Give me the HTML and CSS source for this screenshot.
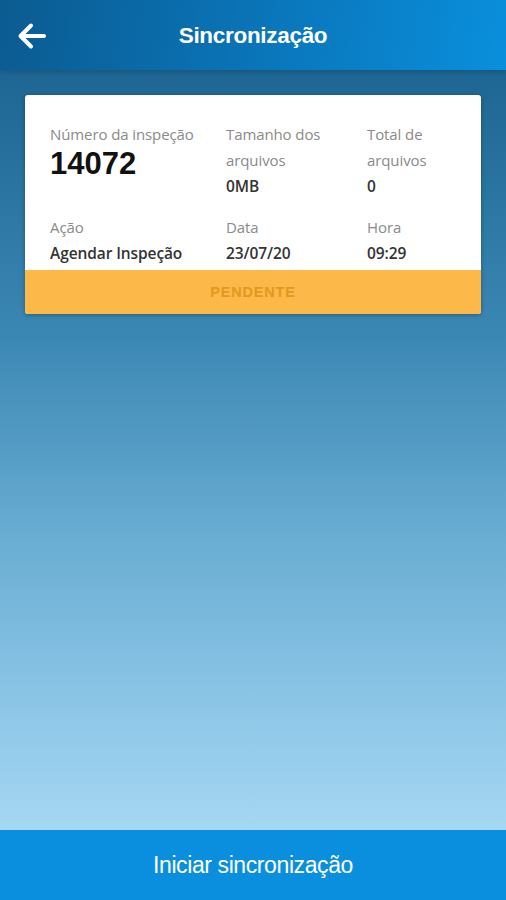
FILE: index.html
```html
<!DOCTYPE html>
<html lang="pt">
<head>
<meta charset="utf-8">
<link rel="stylesheet" href="styles.css">
</head>
<body>
<div class="app">
  <header class="topbar">
    <svg class="back" width="32" height="28" viewBox="0 0 32 28"><path d="M28 14H5M15 3.5L4.5 14 15 24.5" fill="none" stroke="#fff" stroke-width="4" stroke-linecap="round" stroke-linejoin="round"/></svg>
    <h1 class="title">Sincronização</h1>
  </header>
  <main class="content">
    <section class="card">
      <div class="grid">
        <div class="cell">
          <div class="label">Número da inspeção</div>
          <div class="big">14072</div>
        </div>
        <div class="cell">
          <div class="label">Tamanho dos arquivos</div>
          <div class="value">0MB</div>
        </div>
        <div class="cell">
          <div class="label">Total de arquivos</div>
          <div class="value">0</div>
        </div>
        <div class="cell">
          <div class="label">Ação</div>
          <div class="value">Agendar Inspeção</div>
        </div>
        <div class="cell">
          <div class="label">Data</div>
          <div class="value">23/07/20</div>
        </div>
        <div class="cell">
          <div class="label">Hora</div>
          <div class="value">09:29</div>
        </div>
      </div>
      <div class="status">PENDENTE</div>
    </section>
  </main>
  <footer class="action">Iniciar sincronização</footer>
</div>
</body>
</html>
```
FILE: styles.css
```css
* { box-sizing: border-box; }
html, body { margin: 0; padding: 0; }
body { font-family: "Liberation Sans", Arial, sans-serif; }
.app { width: 506px; height: 900px; display: flex; flex-direction: column; }
.topbar {
  height: 70px; flex: none;
  background: linear-gradient(100deg, #0b5b90 0%, #0a74b8 50%, #0a8fdc 100%);
  display: flex; align-items: center; position: relative;
  box-shadow: 0 2px 4px rgba(0,0,0,0.15);
  z-index: 1;
}
.back { margin-left: 16px; margin-top: 2px; }
.title {
  position: absolute; left: 0; right: 0; top: 2px; bottom: 0;
  margin: 0; display: flex; align-items: center; justify-content: center;
  color: #fff; font-size: 22.5px; font-weight: 700; letter-spacing: -0.3px;
  pointer-events: none;
}
.content {
  flex: 1;
  background: linear-gradient(180deg, #1d6593 0%, #3b87b4 35%, #6aaed3 62%, #8ec7e8 85%, #a6d7f2 100%);
  padding: 25px 25px 0 25px;
}
.card {
  background: #fff; border-radius: 3px; overflow: hidden;
  box-shadow: 0 1px 4px rgba(0,0,0,0.3);
}
.grid {
  display: grid; grid-template-columns: 176px 141px 1fr;
  padding: 26px 10px 4px 25px;
  row-gap: 15px;
}
.label { font-family: "Open Sans", "Liberation Sans", sans-serif; color: #8a8a8a; font-size: 15px; line-height: 26px; letter-spacing: -0.1px; }
.big { font-size: 31px; font-weight: 700; color: #111; line-height: 30px; margin-top: 2px; }
.value { font-family: "Open Sans", "Liberation Sans", sans-serif; color: #333; font-size: 15.5px; font-weight: 600; line-height: 26px; letter-spacing: -0.1px; }
.status {
  height: 44px; background: #fdb84a; color: #e09a1c;
  font-weight: 700; font-size: 14.5px; letter-spacing: 0.8px;
  display: flex; align-items: center; justify-content: center;
}
.action {
  height: 70px; flex: none; background: #0a8fdf;
  color: #fff; font-size: 23px; letter-spacing: -0.4px;
  display: flex; align-items: center; justify-content: center;
}
```
